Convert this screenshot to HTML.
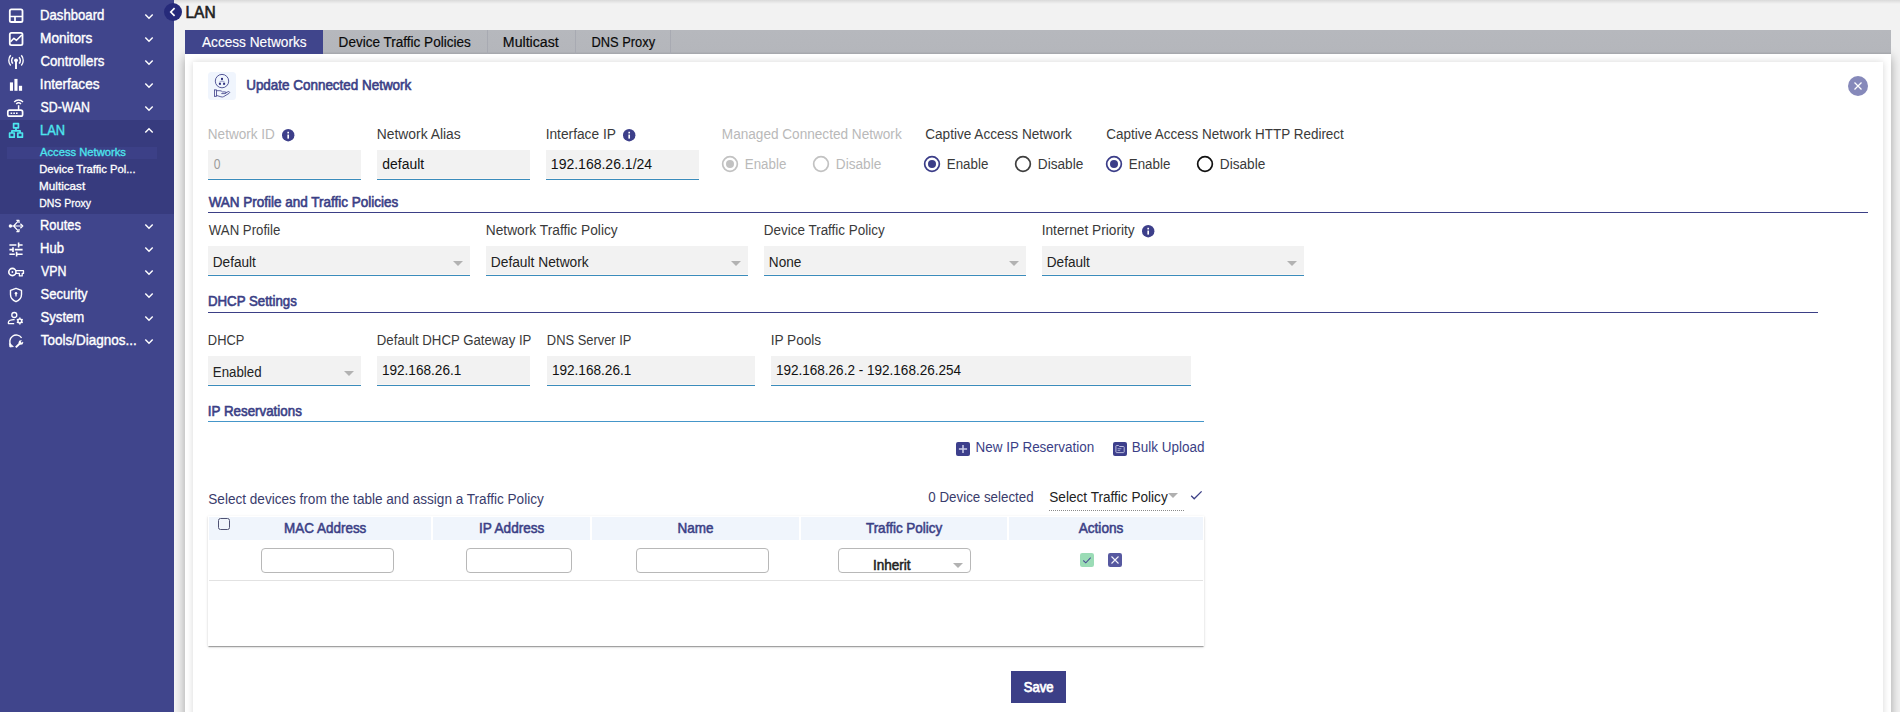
<!DOCTYPE html>
<html lang="en"><head><meta charset="utf-8"><title>LAN - Access Networks</title>
<style>
*{box-sizing:border-box;margin:0;padding:0}
html,body{width:1900px;height:712px;overflow:hidden}
body{background:#f2f2f2;font-family:"Liberation Sans",Arial,sans-serif;position:relative}
.a{position:absolute}
.t{position:absolute;white-space:nowrap;line-height:20px;height:20px;transform-origin:0 50%}
.nav{left:0;top:0;width:174px;height:712px;background:#40458c}
.navd{left:0;top:120px;width:174px;height:94px;background:#373b7e}
.navh{left:7px;top:147px;width:150px;height:12px;background:#3c4087}
.ic{position:absolute;fill:none;stroke:#fff;stroke-width:1.6;stroke-linecap:round;stroke-linejoin:round}
.chev{position:absolute;left:144px;width:10px;height:7px;fill:none;stroke:#fff;stroke-width:1.45;stroke-linecap:butt;stroke-linejoin:miter}
.tabbar{left:185px;top:30px;width:1706px;height:24px;background:linear-gradient(#b6b8bd 0,#b4b6bb 22px,#a8aaaf 23px,#a5a7ac 24px)}
.tabact{left:185px;top:30px;width:138px;height:24px;background:#40458c}
.tsep{top:30px;width:1px;height:24px;background:#a8aab2}
.cont{left:185px;top:54px;width:1706px;height:680px;background:#fff;box-shadow:0 3px 10px rgba(0,0,0,.34)}
.card{left:193px;top:62px;width:1690px;height:680px;background:#fff;box-shadow:0 0 7px rgba(0,0,0,.16)}
.inp{position:absolute;height:30px;background:linear-gradient(#f2f2f2 0,#f2f2f2 28px,#fbf6f3 28px,#fbf6f3 29px,#3a8cbc 29px,#3a8cbc 30px)}
.hr{position:absolute;height:1px;background:#3b3f86}
.radio{position:absolute;width:16px;height:16px;border-radius:50%;border:1.6px solid #3a3a3a;background:#fff}
.radio.on{border-color:#3b3f86}
.radio.on:after{content:"";position:absolute;left:2.4px;top:2.4px;width:8px;height:8px;border-radius:50%;background:#3b3f86}
.radio.dis{border-color:#bdbdbd}
.radio.dis.on:after{background:#bdbdbd}
.arr{position:absolute;width:0;height:0;border-left:5px solid transparent;border-right:5px solid transparent;border-top:5px solid #b2b2b2}
.info{position:absolute;width:12.4px;height:12.4px;overflow:visible}
.th{position:absolute;top:517px;height:23px;background:#f0f5fc}
.fin{position:absolute;top:548px;height:25px;border:1px solid #b8b8b8;border-radius:4px;background:#fff}
</style></head><body>
<!-- sidebar -->
<div class="a nav"></div><div class="a navd"></div><div class="a navh"></div>
<div class="a" style="left:174px;top:0;width:3px;height:712px;background:linear-gradient(90deg,rgba(255,255,255,.25),rgba(255,255,255,0))"></div>
<svg class="a" style="left:0;top:0" width="174" height="360" viewBox="0 0 174 360" fill="none" stroke="#fff" stroke-width="1.6" stroke-linejoin="round">
<!-- dashboard -->
<rect x="9.800" y="9.300" width="12.700" height="12.700" rx="1.600" stroke-width="1.800"/><path d="M10 16.500h12.400M15 16.500v5.400" stroke-width="1.700"/>
<!-- monitors -->
<rect x="9.800" y="32.800" width="12.700" height="12.400" rx="1.600" stroke-width="1.800"/><path d="M10.600 41.800l3.300-3.500 2.600 2 5.300-5.300" stroke-width="1.600"/>
<!-- controllers -->
<circle cx="16" cy="60.300" r="1.900" fill="#fff" stroke="none"/><path d="M16 61v8" stroke-width="1.900" stroke-linecap="butt"/>
<path d="M13 57.200a4.500 4.500 0 0 0 0 6.400M19 57.200a4.500 4.500 0 0 1 0 6.400M10.700 55.300a8 8 0 0 0 0 10.200M21.300 55.300a8 8 0 0 1 0 10.200" stroke-width="1.450"/>
<!-- interfaces -->
<g fill="#fff" stroke="none"><rect x="9.900" y="82.400" width="3.100" height="8.400"/><rect x="14.400" y="78.900" width="3.100" height="11.900"/><rect x="18.900" y="85.800" width="3.200" height="5"/></g>
<!-- sd-wan -->
<rect x="7.800" y="110.200" width="14.800" height="5.900" rx="1.700" stroke-width="1.700"/><path d="M10.600 113.200h1.600M13.300 113.200h1.600M16 113.200h1.600" stroke-width="1.500"/><path d="M18.6 110.6v-5.4" stroke-width="1.5"/>
<path d="M16.2 103.9a3.4 3.4 0 0 1 4.8 0M14.2 101.9a6.2 6.2 0 0 1 8.8 0" stroke-width="1.4"/>
<!-- lan -->
<g stroke="#4de6ee" stroke-width="1.700"><rect x="13.6" y="123.6" width="4.8" height="4.2"/><rect x="9.6" y="133" width="4.6" height="4.2"/><rect x="17.8" y="133" width="4.6" height="4.2"/><path d="M16 128v2.8M11.9 133v-2.2h8.2v2.2"/></g>
<!-- routes -->
<circle cx="10.4" cy="226" r="1.7" fill="#fff" stroke="none"/><path d="M10.4 226h11.8M13.6 226l4.6-4.8M13.6 226l4.6 4.8" stroke-width="1.2"/><path d="M20.4 223.8l2.4 2.2-2.4 2.2M16.4 220.4h2.6v2.6M16.4 231.6h2.6v-2.6" stroke-width="1.2"/>
<!-- hub (tune) -->
<path d="M9.4 245h7M18.6 245h4M9.4 249.6h2.8M14.8 249.6h7.8M9.4 254.2h5.4M16.6 254.2h6M18.6 242.6v4.8M13 247.2v4.8M16.6 251.8v4.8" stroke-width="1.6" stroke-linecap="butt"/>
<!-- vpn key -->
<circle cx="12.4" cy="272" r="3.6" stroke-width="1.6"/><circle cx="12.4" cy="272" r=".9" fill="#fff" stroke="none"/><path d="M16 270.7h7.5v2.7h-1.3v2.5h-2.8v-2.5H16" stroke-width="1.3"/>
<!-- security -->
<path d="M16 288.3l5.5 2v4.2c0 3.3-2.3 5.8-5.5 7.2-3.2-1.4-5.5-3.9-5.5-7.200v-4.2z" stroke-width="1.4"/><circle cx="16" cy="293.3" r="1.25" fill="#fff" stroke="none"/><path d="M16 293.4v3" stroke-width="1.3"/>
<!-- system -->
<circle cx="14.3" cy="315" r="2.5" stroke-width="1.3"/><path d="M14.6 319.6c-3.600-.2-6.200 1-6.200 2.600v1.400h5.800" stroke-width="1.3"/><circle cx="19.800" cy="321" r="1.9" stroke-width="1.500"/><path d="M19.800 317.600v1.2M19.800 323.200v1.200M16.850 319.300l1.050.6M21.700 322.100l1.050.6M16.850 322.700l1.050-.6M21.700 319.900l1.050-.6" stroke-width="1.500" stroke-linecap="butt"/>
<!-- tools -->
<path d="M11 345.4a6 6 0 1 1 10.600-7.600" stroke-width="1.400"/><path d="M9.400 343.600l.5 3.400 3.500-.5z" fill="#fff" stroke-width=".8"/><path d="M15.800 347.400l4.200-4.200" stroke-width="2" stroke-linecap="butt"/><circle cx="20.900" cy="342.500" r="2.300" fill="#fff" stroke="none"/><path d="M21.200 342.200l2.600-2.600" stroke="#40458c" stroke-width="1.500" stroke-linecap="butt"/>
</svg>
<svg class="chev" style="top:12.5px" viewBox="0 0 10 7"><path d="M1.3 1.5l3.7 3.7 3.7-3.7"/></svg><svg class="chev" style="top:35.5px" viewBox="0 0 10 7"><path d="M1.3 1.5l3.7 3.7 3.7-3.7"/></svg><svg class="chev" style="top:58.5px" viewBox="0 0 10 7"><path d="M1.3 1.5l3.7 3.7 3.7-3.7"/></svg><svg class="chev" style="top:81.5px" viewBox="0 0 10 7"><path d="M1.3 1.5l3.7 3.7 3.7-3.7"/></svg><svg class="chev" style="top:104.5px" viewBox="0 0 10 7"><path d="M1.3 1.5l3.7 3.7 3.7-3.7"/></svg><svg class="chev" style="top:222.5px" viewBox="0 0 10 7"><path d="M1.3 1.5l3.7 3.7 3.7-3.7"/></svg><svg class="chev" style="top:245.5px" viewBox="0 0 10 7"><path d="M1.3 1.5l3.7 3.7 3.7-3.7"/></svg><svg class="chev" style="top:268.5px" viewBox="0 0 10 7"><path d="M1.3 1.5l3.7 3.7 3.7-3.7"/></svg><svg class="chev" style="top:291.5px" viewBox="0 0 10 7"><path d="M1.3 1.5l3.7 3.7 3.7-3.7"/></svg><svg class="chev" style="top:314.5px" viewBox="0 0 10 7"><path d="M1.3 1.5l3.7 3.7 3.7-3.7"/></svg><svg class="chev" style="top:337.5px" viewBox="0 0 10 7"><path d="M1.3 1.5l3.7 3.7 3.7-3.7"/></svg><svg class="chev" style="top:126.5px" viewBox="0 0 10 7"><path d="M1.3 5.5l3.7-3.7 3.7 3.7"/></svg>
<!-- main -->
<div class="a" style="left:174px;top:0;width:1726px;height:4px;background:linear-gradient(rgba(0,0,0,.1),rgba(0,0,0,0))"></div>
<div class="a cont"></div>
<div class="a tabbar"></div><div class="a tabact"></div>
<div class="a tsep" style="left:487px"></div><div class="a tsep" style="left:575px"></div><div class="a tsep" style="left:670px"></div>
<div class="a card"></div>
<!-- collapse btn -->
<svg class="a" style="left:164px;top:3px" width="18" height="18" viewBox="0 0 18 18"><circle cx="9" cy="9" r="9" fill="#262a7a"/><path d="M10.6 5.2 L6.8 9 L10.6 12.8" fill="none" stroke="#fff" stroke-width="1.7"/></svg>
<!-- card header -->
<div class="a" style="left:208px;top:72px;width:28px;height:28px;border-radius:3.5px;background:#f0f5fd"></div>
<svg class="a" style="left:208px;top:72px" width="28" height="28" viewBox="0 0 28 28" fill="none" stroke="#3b3d88" stroke-width="0.85"><circle cx="14" cy="9.1" r="6.7"/><g fill="#2f317f" stroke="none"><rect x="13" y="5.9" width="2" height="2"/><rect x="10.9" y="10.8" width="2" height="2"/><rect x="15.1" y="10.8" width="2" height="2"/></g><path d="M14 7.9v1.5M11.9 10.8V9.4h4.2v1.4" stroke-width=".5" opacity=".7"/><g transform="translate(14 20) scale(.92 1) translate(-14.25 -19.4)"><rect x="6" y="17.3" width="2.2" height="6.4"/><path d="M8.2 18.1h3.8c1.3 0 1.9.5 2.7 1.2h3c1.3 0 1.3 1.7 0 1.7h-4.2M17.9 20.3l3.3-1.3c1.3-.4 1.9 1.1.8 1.7l-5.9 3.3c-1 .5-2 .5-3 .2l-4.9-1.4"/></g></svg>
<svg class="a" style="left:1848px;top:76px" width="20" height="20" viewBox="0 0 20 20"><circle cx="10" cy="10" r="10" fill="#8689ba"/><path d="M6.5 6.5l7 7M13.5 6.5l-7 7" stroke="#fff" stroke-width="1.25"/></svg>
<!-- row 1 -->
<div class="inp" style="left:208px;top:150px;width:153px"></div>
<div class="inp" style="left:377px;top:150px;width:153px"></div>
<div class="inp" style="left:546px;top:150px;width:153px"></div>
<svg class="info" style="left:282.2px;top:128.8px" viewBox="0 0 12 12"><circle cx="6" cy="6" r="6" fill="#3d3f8a"/><rect x="5.2" y="5.4" width="1.6" height="3.9" fill="#fff"/><rect x="5.2" y="2.7" width="1.6" height="1.6" fill="#fff"/></svg>
<svg class="info" style="left:623.1px;top:129.2px" viewBox="0 0 12 12"><circle cx="6" cy="6" r="6" fill="#3d3f8a"/><rect x="5.2" y="5.4" width="1.6" height="3.9" fill="#fff"/><rect x="5.2" y="2.7" width="1.6" height="1.6" fill="#fff"/></svg>
<svg class="a" style="left:721px;top:155px" width="18" height="18" viewBox="0 0 18 18"><circle cx="9" cy="9" r="7.35" fill="#fff" stroke="#c2c2c2" stroke-width="1.7"/><circle cx="9" cy="9" r="4" fill="#c2c2c2"/></svg><svg class="a" style="left:812px;top:155px" width="18" height="18" viewBox="0 0 18 18"><circle cx="9" cy="9" r="7.35" fill="#fff" stroke="#c2c2c2" stroke-width="1.7"/></svg>
<svg class="a" style="left:923px;top:155px" width="18" height="18" viewBox="0 0 18 18"><circle cx="9" cy="9" r="7.35" fill="#fff" stroke="#3b3d88" stroke-width="1.7"/><circle cx="9" cy="9" r="4" fill="#3b3d88"/></svg><svg class="a" style="left:1014px;top:155px" width="18" height="18" viewBox="0 0 18 18"><circle cx="9" cy="9" r="7.35" fill="#fff" stroke="#3f3f3f" stroke-width="1.7"/></svg>
<svg class="a" style="left:1104.5px;top:155px" width="18" height="18" viewBox="0 0 18 18"><circle cx="9" cy="9" r="7.35" fill="#fff" stroke="#3b3d88" stroke-width="1.7"/><circle cx="9" cy="9" r="4" fill="#3b3d88"/></svg><svg class="a" style="left:1196px;top:155px" width="18" height="18" viewBox="0 0 18 18"><circle cx="9" cy="9" r="7.35" fill="#fff" stroke="#111" stroke-width="1.7"/></svg>
<!-- section 2 -->
<div class="hr" style="left:208px;top:212px;width:1660px"></div>
<div class="inp" style="left:208px;top:246px;width:262px"></div><div class="arr" style="left:453px;top:261px"></div>
<div class="inp" style="left:486px;top:246px;width:262px"></div><div class="arr" style="left:731px;top:261px"></div>
<div class="inp" style="left:764px;top:246px;width:262px"></div><div class="arr" style="left:1009px;top:261px"></div>
<div class="inp" style="left:1042px;top:246px;width:262px"></div><div class="arr" style="left:1287px;top:261px"></div>
<svg class="info" style="left:1141.8px;top:224.8px" viewBox="0 0 12 12"><circle cx="6" cy="6" r="6" fill="#3d3f8a"/><rect x="5.2" y="5.4" width="1.6" height="3.9" fill="#fff"/><rect x="5.2" y="2.7" width="1.6" height="1.6" fill="#fff"/></svg>
<!-- section 3 -->
<div class="hr" style="left:208px;top:312px;width:1610px"></div>
<div class="inp" style="left:208px;top:356px;width:153px"></div><div class="arr" style="left:344px;top:371px"></div>
<div class="inp" style="left:377px;top:356px;width:153px"></div>
<div class="inp" style="left:547px;top:356px;width:208px"></div>
<div class="inp" style="left:771px;top:356px;width:420px"></div>
<!-- section 4 -->
<div class="hr" style="left:208px;top:421px;width:996px;background:#4596c9"></div>
<svg class="a" style="left:956px;top:442px" width="14" height="14" viewBox="0 0 14 14"><rect width="14" height="14" rx="2" fill="#3d3f8c"/><path d="M7 2.900v8.200M2.900 7h8.200" stroke="#cdcfe9" stroke-width="1.500"/></svg>
<svg class="a" style="left:1113.400px;top:442px" width="14" height="14" viewBox="0 0 14 14"><rect width="14" height="14" rx="2" fill="#3d3f8c"/><path d="M2.900 4.100c0-.4.300-.6.600-.6h2l1 1h4c.4 0 .7.300.7.700v4.700c0 .4-.3.700-.7.700H3.500c-.300 0-.600-.3-.600-.7z" fill="none" stroke="#b9bbdc" stroke-width="1"/><path d="M4.600 6.700h3.800M4.600 8.400h2.600" stroke="#9da0cc" stroke-width="1"/></svg>
<div class="a" style="left:1049px;top:510px;width:135px;height:0;border-top:1px dotted #8a8a8a"></div>
<div class="arr" style="left:1168px;top:493px;border-top-color:#b0b0b0"></div>
<svg class="a" style="left:1190px;top:490px" width="13" height="11" viewBox="0 0 13 11"><path d="M1.2 5.8l3 3L11.6 1.4" fill="none" stroke="#3b3f86" stroke-width="1.3"/></svg>
<!-- table -->
<div class="a" style="left:208px;top:516px;width:996px;height:130px;background:#fff;box-shadow:0 2px 1px -1px rgba(0,0,0,.2),0 1px 1px 0 rgba(0,0,0,.14),0 1px 3px 0 rgba(0,0,0,.12)"></div>
<div class="th" style="left:209px;width:222px"></div><div class="th" style="left:433px;width:157px"></div><div class="th" style="left:592px;width:207px"></div><div class="th" style="left:801px;width:206px"></div><div class="th" style="left:1009px;width:194px"></div>
<div class="a" style="left:218px;top:518px;width:12px;height:12px;border:1.3px solid #4f5273;border-radius:2.5px;background:#f0f5fc"></div>
<div class="fin" style="left:261px;width:133px"></div><div class="fin" style="left:466px;width:106px"></div><div class="fin" style="left:636px;width:133px"></div><div class="fin" style="left:838px;width:133px"></div>
<div class="arr" style="left:953px;top:563px"></div>
<div class="a" style="left:209px;top:580px;width:994px;height:1px;background:#e2e2e2"></div>
<svg class="a" style="left:1080px;top:553px" width="14" height="14" viewBox="0 0 14 14"><rect width="14" height="14" rx="2.2" fill="#9bdcb6"/><path d="M3.300 7.500l2.500 2.300 4.900-5.100" fill="none" stroke="#4a4e93" stroke-width="1.050"/></svg>
<svg class="a" style="left:1108px;top:553px" width="14" height="14" viewBox="0 0 14 14"><rect width="14" height="14" rx="2.2" fill="#5658a0"/><path d="M3.500 3.500l7 7M10.500 3.500l-7 7" stroke="#f4f4fb" stroke-width="1.100"/></svg>
<div class="a" style="left:1011px;top:671px;width:55px;height:32px;background:#3c3f87"></div>
<span class="t" style="left:40px;top:6px;font-size:13.79px;color:#fff;-webkit-text-stroke:0.38px #fff;transform:translate(0.04px,0.34px) scaleX(0.9539);">Dashboard</span>
<span class="t" style="left:39px;top:29px;font-size:13.79px;color:#fff;-webkit-text-stroke:0.38px #fff;transform:translate(0.99px,0.34px) scaleX(0.9926);">Monitors</span>
<span class="t" style="left:40px;top:52px;font-size:13.79px;color:#fff;-webkit-text-stroke:0.38px #fff;transform:translate(0.43px,0.34px) scaleX(0.9606);">Controllers</span>
<span class="t" style="left:39px;top:75px;font-size:13.79px;color:#fff;-webkit-text-stroke:0.38px #fff;transform:translate(0.87px,0.34px) scaleX(0.9848);">Interfaces</span>
<span class="t" style="left:40px;top:98px;font-size:13.79px;color:#fff;-webkit-text-stroke:0.38px #fff;transform:translate(0.54px,0.34px) scaleX(0.8933);">SD-WAN</span>
<span class="t" style="left:40px;top:121px;font-size:13.79px;color:#4de6ee;-webkit-text-stroke:0.38px #4de6ee;transform:translate(0.06px,0.34px) scaleX(0.9311);">LAN</span>
<span class="t" style="left:40px;top:216px;font-size:13.79px;color:#fff;-webkit-text-stroke:0.38px #fff;transform:translate(0.06px,0.34px) scaleX(0.9357);">Routes</span>
<span class="t" style="left:40px;top:239px;font-size:13.79px;color:#fff;-webkit-text-stroke:0.38px #fff;transform:translate(0.04px,0.34px) scaleX(0.9480);">Hub</span>
<span class="t" style="left:41px;top:262px;font-size:13.79px;color:#fff;-webkit-text-stroke:0.38px #fff;transform:translate(0.03px,0.34px) scaleX(0.8989);">VPN</span>
<span class="t" style="left:40px;top:285px;font-size:13.79px;color:#fff;-webkit-text-stroke:0.38px #fff;transform:translate(0.50px,0.34px) scaleX(0.9442);">Security</span>
<span class="t" style="left:40px;top:308px;font-size:13.79px;color:#fff;-webkit-text-stroke:0.38px #fff;transform:translate(0.50px,0.34px) scaleX(0.9538);">System</span>
<span class="t" style="left:40px;top:331px;font-size:13.79px;color:#fff;-webkit-text-stroke:0.38px #fff;transform:translate(0.82px,0.34px) scaleX(0.9781);">Tools/Diagnos...</span>
<span class="t" style="left:40px;top:141px;font-size:11.00px;color:#4de6ee;-webkit-text-stroke:0.30px #4de6ee;transform:translate(0.05px,0.94px) scaleX(1.0181);">Access Networks</span>
<span class="t" style="left:39px;top:158px;font-size:11.00px;color:#fff;-webkit-text-stroke:0.30px #fff;transform:translate(0.15px,0.94px) scaleX(1.0197);">Device Traffic Pol...</span>
<span class="t" style="left:39px;top:175px;font-size:11.00px;color:#fff;-webkit-text-stroke:0.30px #fff;transform:translate(0.12px,0.94px) scaleX(1.0599);">Multicast</span>
<span class="t" style="left:39px;top:192px;font-size:11.00px;color:#fff;-webkit-text-stroke:0.30px #fff;transform:translate(0.21px,0.94px) scaleX(0.9530);">DNS Proxy</span>
<span class="t" style="left:185px;top:2px;font-size:15.76px;color:#222;-webkit-text-stroke:0.63px #222;transform:translate(0.47px,0.94px) scaleX(0.9836);">LAN</span>
<span class="t" style="left:201px;top:32px;font-size:14.00px;color:#fff;-webkit-text-stroke:0.15px #fff;transform:translate(0.97px,0.01px) scaleX(0.9744);">Access Networks</span>
<span class="t" style="left:338px;top:32px;font-size:14.00px;color:#0a0a0a;-webkit-text-stroke:0.18px #0a0a0a;transform:translate(0.61px,0.01px) scaleX(0.9668);">Device Traffic Policies</span>
<span class="t" style="left:502px;top:32px;font-size:14.00px;color:#0a0a0a;-webkit-text-stroke:0.18px #0a0a0a;transform:translate(0.86px,0.01px) scaleX(1.0107);">Multicast</span>
<span class="t" style="left:591px;top:32px;font-size:14.00px;color:#0a0a0a;-webkit-text-stroke:0.18px #0a0a0a;transform:translate(0.46px,0.01px) scaleX(0.9194);">DNS Proxy</span>
<span class="t" style="left:246px;top:76px;font-size:13.79px;color:#3b3f86;-webkit-text-stroke:0.60px #3b3f86;transform:translate(0.19px,0.44px) scaleX(0.9752);">Update Connected Network</span>
<span class="t" style="left:207px;top:124px;font-size:14.00px;color:#b9b9b9;transform:translate(0.82px,0.01px) scaleX(0.9677);">Network ID</span>
<span class="t" style="left:376px;top:124px;font-size:14.00px;color:#3a3a3a;transform:translate(0.79px,0.01px) scaleX(0.9888);">Network Alias</span>
<span class="t" style="left:545px;top:124px;font-size:14.00px;color:#3a3a3a;transform:translate(0.66px,0.01px) scaleX(0.9816);">Interface IP</span>
<span class="t" style="left:721px;top:124px;font-size:14.00px;color:#b9b9b9;transform:translate(0.81px,0.01px) scaleX(0.9712);">Managed Connected Network</span>
<span class="t" style="left:925px;top:124px;font-size:14.00px;color:#3a3a3a;transform:translate(0.22px,0.01px) scaleX(0.9706);">Captive Access Network</span>
<span class="t" style="left:1106px;top:124px;font-size:14.00px;color:#3a3a3a;transform:translate(0.23px,0.01px) scaleX(0.9613);">Captive Access Network HTTP Redirect</span>
<span class="t" style="left:213px;top:154px;font-size:14.00px;color:#9a9a9a;transform:translate(0.82px,0.01px) scaleX(0.8631);">0</span>
<span class="t" style="left:382px;top:154px;font-size:14.00px;color:#111;transform:translate(0.34px,0.01px) scaleX(0.9935);">default</span>
<span class="t" style="left:550px;top:154px;font-size:14.00px;color:#111;transform:translate(0.85px,0.01px) scaleX(1.0005);">192.168.26.1/24</span>
<span class="t" style="left:744px;top:154px;font-size:14.00px;color:#b9b9b9;transform:translate(0.84px,0.01px) scaleX(0.9508);">Enable</span>
<span class="t" style="left:835px;top:154px;font-size:14.00px;color:#b9b9b9;transform:translate(0.81px,0.01px) scaleX(0.9746);">Disable</span>
<span class="t" style="left:946px;top:154px;font-size:14.00px;color:#3a3a3a;transform:translate(0.84px,0.01px) scaleX(0.9508);">Enable</span>
<span class="t" style="left:1037px;top:154px;font-size:14.00px;color:#3a3a3a;transform:translate(0.81px,0.01px) scaleX(0.9746);">Disable</span>
<span class="t" style="left:1128px;top:154px;font-size:14.00px;color:#3a3a3a;transform:translate(0.84px,0.01px) scaleX(0.9508);">Enable</span>
<span class="t" style="left:1219px;top:154px;font-size:14.00px;color:#3a3a3a;transform:translate(0.81px,0.01px) scaleX(0.9746);">Disable</span>
<span class="t" style="left:208px;top:193px;font-size:13.79px;color:#3b3f86;-webkit-text-stroke:0.60px #3b3f86;transform:translate(0.63px,0.04px) scaleX(0.9786);">WAN Profile and Traffic Policies</span>
<span class="t" style="left:208px;top:220px;font-size:14.00px;color:#3a3a3a;transform:translate(0.83px,0.01px) scaleX(0.9444);">WAN Profile</span>
<span class="t" style="left:485px;top:220px;font-size:14.00px;color:#3a3a3a;transform:translate(0.80px,0.01px) scaleX(0.9819);">Network Traffic Policy</span>
<span class="t" style="left:763px;top:220px;font-size:14.00px;color:#3a3a3a;transform:translate(0.82px,0.01px) scaleX(0.9609);">Device Traffic Policy</span>
<span class="t" style="left:1041px;top:220px;font-size:14.00px;color:#3a3a3a;transform:translate(0.67px,0.01px) scaleX(0.9801);">Internet Priority</span>
<span class="t" style="left:212px;top:252px;font-size:14.00px;color:#222;transform:translate(0.81px,0.01px) scaleX(0.9694);">Default</span>
<span class="t" style="left:490px;top:252px;font-size:14.00px;color:#222;transform:translate(0.80px,0.01px) scaleX(0.9828);">Default Network</span>
<span class="t" style="left:768px;top:252px;font-size:14.00px;color:#222;transform:translate(0.81px,0.01px) scaleX(0.9713);">None</span>
<span class="t" style="left:1046px;top:252px;font-size:14.00px;color:#222;transform:translate(0.81px,0.01px) scaleX(0.9694);">Default</span>
<span class="t" style="left:207px;top:292px;font-size:13.79px;color:#3b3f86;-webkit-text-stroke:0.60px #3b3f86;transform:translate(0.94px,0.04px) scaleX(0.9617);">DHCP Settings</span>
<span class="t" style="left:207px;top:330px;font-size:14.00px;color:#3a3a3a;transform:translate(0.87px,0.01px) scaleX(0.9206);">DHCP</span>
<span class="t" style="left:376px;top:330px;font-size:14.00px;color:#3a3a3a;transform:translate(0.84px,0.01px) scaleX(0.9429);">Default DHCP Gateway IP</span>
<span class="t" style="left:546px;top:330px;font-size:14.00px;color:#3a3a3a;transform:translate(0.87px,0.01px) scaleX(0.9205);">DNS Server IP</span>
<span class="t" style="left:770px;top:330px;font-size:14.00px;color:#3a3a3a;transform:translate(0.67px,0.01px) scaleX(0.9737);">IP Pools</span>
<span class="t" style="left:212px;top:361px;font-size:14.00px;color:#222;transform:translate(0.84px,0.51px) scaleX(0.9483);">Enabled</span>
<span class="t" style="left:381px;top:360px;font-size:14.00px;color:#111;transform:translate(0.88px,0.01px) scaleX(0.9715);">192.168.26.1</span>
<span class="t" style="left:551px;top:360px;font-size:14.00px;color:#111;transform:translate(0.88px,0.01px) scaleX(0.9715);">192.168.26.1</span>
<span class="t" style="left:775px;top:360px;font-size:14.00px;color:#111;transform:translate(0.88px,0.01px) scaleX(0.9671);">192.168.26.2 - 192.168.26.254</span>
<span class="t" style="left:207px;top:402px;font-size:13.79px;color:#3b3f86;-webkit-text-stroke:0.60px #3b3f86;transform:translate(0.80px,0.04px) scaleX(0.9690);">IP Reservations</span>
<span class="t" style="left:975px;top:437px;font-size:14.00px;color:#3b3f86;transform:translate(0.52px,0.01px) scaleX(0.9617);">New IP Reservation</span>
<span class="t" style="left:1131px;top:437px;font-size:14.00px;color:#3b3f86;transform:translate(0.82px,0.01px) scaleX(0.9642);">Bulk Upload</span>
<span class="t" style="left:208px;top:488px;font-size:14.00px;color:#3a3c6c;transform:translate(0.29px,0.51px) scaleX(0.9694);">Select devices from the table and assign a Traffic Policy</span>
<span class="t" style="left:928px;top:487px;font-size:14.00px;color:#3a3c6c;transform:translate(0.37px,0.01px) scaleX(0.9524);">0 Device selected</span>
<span class="t" style="left:1049px;top:487px;font-size:14.00px;color:#222;transform:translate(0.29px,0.01px) scaleX(0.9716);">Select Traffic Policy</span>
<span class="t" style="left:284px;top:519px;font-size:13.79px;color:#3b3f86;-webkit-text-stroke:0.52px #3b3f86;transform:translate(0.08px,0.14px) scaleX(0.9763);">MAC Address</span>
<span class="t" style="left:478px;top:519px;font-size:13.79px;color:#3b3f86;-webkit-text-stroke:0.52px #3b3f86;transform:translate(0.94px,0.14px) scaleX(0.9851);">IP Address</span>
<span class="t" style="left:677px;top:519px;font-size:13.79px;color:#3b3f86;-webkit-text-stroke:0.52px #3b3f86;transform:translate(0.58px,0.14px) scaleX(0.9787);">Name</span>
<span class="t" style="left:865px;top:519px;font-size:13.79px;color:#3b3f86;-webkit-text-stroke:0.52px #3b3f86;transform:translate(0.89px,0.14px) scaleX(0.9790);">Traffic Policy</span>
<span class="t" style="left:1078px;top:519px;font-size:13.79px;color:#3b3f86;-webkit-text-stroke:0.52px #3b3f86;transform:translate(0.66px,0.14px) scaleX(0.9895);">Actions</span>
<span class="t" style="left:872px;top:556px;font-size:13.79px;color:#222;-webkit-text-stroke:0.50px #222;transform:translate(0.93px,0.14px) scaleX(0.9822);">Inherit</span>
<span class="t" style="left:1023px;top:678px;font-size:13.79px;color:#fff;-webkit-text-stroke:0.75px #fff;transform:translate(0.69px,0.24px) scaleX(0.9454);">Save</span>
</body></html>
